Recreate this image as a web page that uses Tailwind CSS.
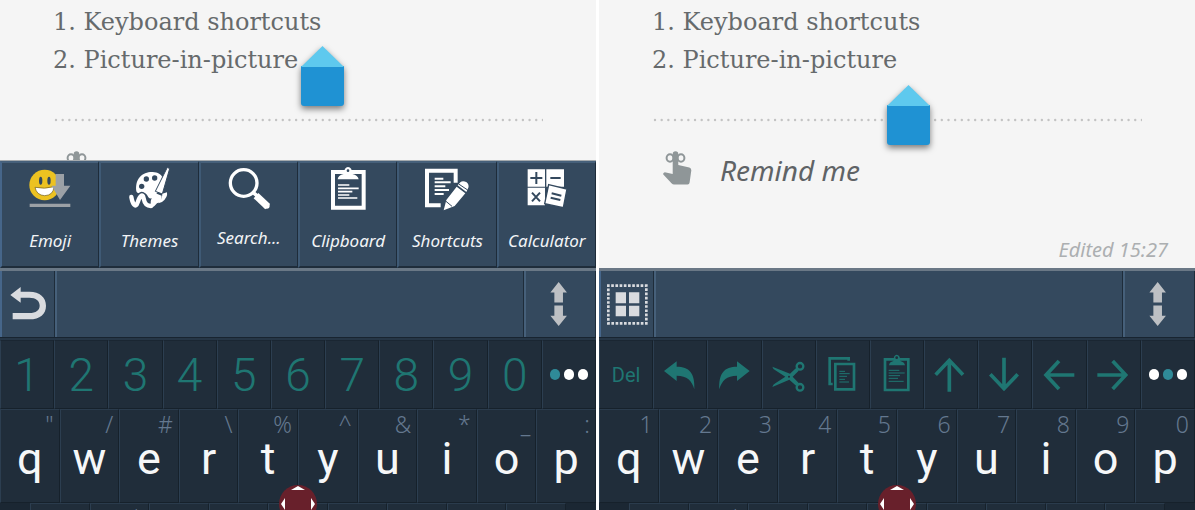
<!DOCTYPE html>
<html lang="en">
  <head>
    <meta charset="UTF-8" />
    <meta name="viewport" content="width=device-width, initial-scale=1.0" />
    <title>Keyboard toolbar</title>
    <script src="https://cdn.jsdelivr.net/npm/@tailwindcss/browser@4"></script>
  </head>
  <body class="bg-white h-screen overflow-hidden">
    <!-- shared shapes -->
    <svg class="hidden">
      <symbol id="reminder" viewBox="0 0 30 34">
        <g fill="none" stroke="#8f9698" stroke-width="2">
          <ellipse cx="7" cy="7" rx="3.4" ry="3.8" />
          <ellipse cx="18" cy="7" rx="3.4" ry="3.8" />
        </g>
        <path fill="#8f9698" d="M9.7 3a2.8 2.8 0 0 1 5.6 0V14l11 2.5q2.2.8 2 3L26.600 31.500q-.2 2-2 2H11q-1.300 0-2.500-1.200L.3 23.500Q-.3 22 1.800 21.200L9.700 23Z" />
      </symbol>
      <symbol id="handle" viewBox="0 0 43 60">
        <path fill="#1f92d3" d="M0 20H43V57q0 3-3 3H3q-3 0-3-3Z" />
        <path fill="#5ec9ee" d="M21.500 0L43 21H0Z" />
      </symbol>
      <symbol id="resize" viewBox="759 52 51 133">
        <path fill="#bdc0c4" d="M785 52L810 84H798V114H772V84H760ZM772 123H798V154H810L785 185L760 154H772Z" />
      </symbol>
    </svg>

    <main class="grid grid-cols-2 gap-[3px] h-full">
      <!-- number keys with the menu open -->
      <section class="flex flex-col min-w-0 relative overflow-hidden bg-[#1b2733]">
        <div class="relative h-[268px] shrink-0 overflow-hidden bg-[#f5f5f5] pl-[53px] pr-[27px] pt-[3px]">
          <div class="font-['DejaVu_Serif',serif] text-2xl leading-[38px] text-[#666a6c]">
            <p>1. Keyboard shortcuts</p>
            <p>2. Picture-in-picture</p>
          </div>
          <svg class="mt-[39px] h-1 w-[calc(100%-26px)]"><line x1="3" y1="2" x2="100%" y2="2" stroke="#c3c3c3" stroke-width="2.400" stroke-linecap="round" stroke-dasharray="0 6.670" /></svg>
          <div class="flex items-center gap-[27px] mt-7 pl-[11px]">
            <svg class="w-[30px] h-[34px]"><use href="#reminder" /></svg>
            <span class="pt-1 font-['Noto_Sans',sans-serif] italic text-[28px] leading-8 text-[#5f6366]">Remind me</span>
          </div>
          <svg class="absolute left-[301px] top-[46px] w-[43px] h-[60px] drop-shadow-[0_3px_3px_rgba(0,0,0,0.5)]"><use href="#handle" /></svg>

          <nav class="absolute inset-x-0 bottom-0 h-[108px] grid grid-cols-6 border-t border-t-[#a5aaad] font-['Noto_Sans',sans-serif] italic text-[17px] text-[#f2f4f6]">
            <button class="flex flex-col items-center gap-[18px] pt-1 min-w-0 bg-[#34495e] border-t-2 border-b-2 border-l-2 border-r border-t-[#46607a] border-l-[#46668a] border-r-[#1e2c3a] border-b-[#1f2d3b]">
              <svg class="w-11 h-11 shrink-0" viewBox="87 51 132 132">
                <circle cx="137" cy="105" r="46" fill="#ecc221" />
                <ellipse cx="125" cy="92" rx="5" ry="12" fill="#34495e" />
                <ellipse cx="150" cy="92" rx="5" ry="12" fill="#34495e" />
                <path fill="#fff" stroke="#6c5a1c" stroke-width="2" d="M108 112Q137 118 165 110Q163 136 137 137Q113 136 108 112Z" />
                <path fill="#9ca1a6" d="M170 72H195V107H214L183 150L158 107H170Z" />
                <path fill="#9ca1a6" d="M92 161H214V171H92Z" />
              </svg>
              <span class="leading-6">Emoji</span>
            </button>
            <button class="flex flex-col items-center gap-[18px] pt-1 min-w-0 bg-[#34495e] border-t-2 border-b-2 border-l-2 border-r border-t-[#46607a] border-l-[#3f5a75] border-r-[#1e2c3a] border-b-[#1f2d3b]">
              <svg class="w-11 h-11 shrink-0" viewBox="381 51 132 132">
                <path fill="#fff" d="M409 124C404 86 428 65 458 66C474 67 484 73 487 82L472 128L456 144C444 150 444 132 434 129C424 126 414 136 409 124Z" />
                <g fill="#34495e"><circle cx="439" cy="87" r="8" /><circle cx="464" cy="84" r="8" /><circle cx="425" cy="109" r="8" /></g>
                <path fill="none" stroke="#34495e" stroke-width="19" d="M393 141C397 165 406 179 412 158C418 138 427 126 430 143C433 163 440 168 451 169" />
                <path fill="none" stroke="#fff" stroke-width="13" stroke-linecap="round" stroke-linejoin="round" d="M394 141C398 163 407 176 413 157C419 138 428 128 431 145C434 163 441 168 453 168" />
                <path fill="#fff" stroke="#34495e" stroke-width="3" d="M502 52L509 56L487 132L466 124Z" />
                <path fill="#fff" d="M463 128L485 137Q484 156 471 160Q464 169 454 175Q447 151 463 128ZM487 131L501 127Q504 143 486 156L475 160Q487 147 487 131Z" />
              </svg>
              <span class="leading-6">Themes</span>
            </button>
            <button class="flex flex-col items-center gap-[15px] pt-1 min-w-0 bg-[#34495e] border-t-2 border-b-2 border-l-2 border-r border-t-[#46607a] border-l-[#3f5a75] border-r-[#1e2c3a] border-b-[#1f2d3b]">
              <svg class="w-11 h-11 shrink-0" viewBox="679 51 132 132">
                <circle cx="729" cy="99" r="40" fill="none" stroke="#fff" stroke-width="10" />
                <path stroke="#fff" stroke-width="11" d="M757 127L772 140" />
                <path stroke="#fff" stroke-width="21" stroke-linejoin="round" d="M766 137L801 170" />
                <circle cx="798" cy="167" r="9" fill="#fff" />
              </svg>
              <span class="leading-6">Search...</span>
            </button>
            <button class="flex flex-col items-center gap-[18px] pt-1 min-w-0 bg-[#34495e] border-t-2 border-b-2 border-l-2 border-r border-t-[#46607a] border-l-[#3f5a75] border-r-[#1e2c3a] border-b-[#1f2d3b]">
              <svg class="w-11 h-11 shrink-0" viewBox="87 51 132 132">
                <path fill="none" stroke="#fff" stroke-width="12" d="M108 66H200V173H108Z" />
                <path fill="#fff" d="M122 88Q123 76 140 72Q142 51 153 51Q165 51 166 72Q183 76 185 88Z" />
                <circle cx="153" cy="62" r="4" fill="#34495e" />
                <path stroke="#fff" stroke-width="5" d="M123 105H157M123 115H185M123 125H166M123 135H157M123 144H181" />
              </svg>
              <span class="leading-6">Clipboard</span>
            </button>
            <button class="flex flex-col items-center gap-[18px] pt-1 min-w-0 bg-[#34495e] border-t-2 border-b-2 border-l-2 border-r border-t-[#46607a] border-l-[#3f5a75] border-r-[#1e2c3a] border-b-[#1f2d3b]">
              <svg class="w-11 h-11 shrink-0" viewBox="385 51 132 132">
                <path fill="none" stroke="#fff" stroke-width="12" d="M477 98V62H391V166H432" />
                <path stroke="#fff" stroke-width="6" d="M414 86H440M414 97H462M414 109H446M414 120H457M414 132H441" />
                <path fill="#fff" d="M441 181L449 150L480 110L506 130L474 168ZM483 106L491 97Q498 91 510 97Q518 103 515 113L509 126Z" />
                <path stroke="#34495e" stroke-width="3" d="M448 154L466 169M486 102L513 120" />
              </svg>
              <span class="leading-6">Shortcuts</span>
            </button>
            <button class="flex flex-col items-center gap-[18px] pt-1 min-w-0 bg-[#34495e] border-t-2 border-b-2 border-l-2 border-r border-t-[#46607a] border-l-[#3f5a75] border-r-[#1e2c3a] border-b-[#1f2d3b]">
              <svg class="w-11 h-11 shrink-0" viewBox="683 51 132 132">
                <path fill="#fff" d="M691 58H743V110H691ZM747 58H800V110H747ZM691 113H743V166H691Z" />
                <path stroke="#34495e" stroke-width="6" d="M699 84H735M717 66V102M759 84H790M704 128L728 154M728 128L704 154" />
                <path fill="#fff" stroke="#34495e" stroke-width="4" d="M754 104L809 117L798 173L742 161Z" />
                <path stroke="#34495e" stroke-width="6" d="M763 130L792 137M760 143L789 150" />
              </svg>
              <span class="leading-6">Calculator</span>
            </button>
          </nav>
        </div>

        <div class="flex shrink-0 h-[70px] bg-[#34495e] border-t-3 border-t-[#6a7886] border-b border-b-[#182430]">
          <button aria-label="Back" class="flex items-center justify-center w-[55px] border-l-2 border-l-[#46668a] border-r border-r-[#1e2c3a]">
            <svg class="w-9 h-[34px]" viewBox="30 69 108 102">
              <path fill="#d9dbdf" d="M31 93L62 69V83H88C120 83 138 100 138 125C138 150 120 166 88 166H38V147H88C108 147 119 138 119 125C119 110 108 101 88 101H62V116Z" />
            </svg>
          </button>
          <div class="flex-1 border-l-2 border-l-[#46607a] border-r border-r-[#1e2c3a]"></div>
          <button aria-label="Resize" class="flex items-center justify-center w-[72px] pr-1 border-l-2 border-l-[#46607a] border-r border-r-[#1e2c3a]">
            <svg class="w-[17px] h-11"><use href="#resize" /></svg>
          </button>
        </div>

        <div id="number-row" class="grid grid-cols-11 shrink-0 h-[71px] border-t-2 border-t-[#263646]"></div>
        <div id="symbol-keys" class="grid grid-cols-10 shrink-0 h-[94px]"></div>
        <div class="relative flex-1 px-[30px]">
          <div id="symbol-row-3" class="grid grid-cols-9"></div>
          <svg class="absolute left-1/2 -translate-x-1/2 -top-[18px] w-[38px] h-[38px]" viewBox="0 0 38 38">
            <circle cx="19" cy="19" r="19" fill="#68202b" />
            <path fill="#fff" d="M19 1L26 5H12ZM2 19L6 13V25ZM36 19L32 13V25Z" />
          </svg>
        </div>
      </section>

      <!-- editing keys -->
      <section class="flex flex-col min-w-0 relative overflow-hidden bg-[#1b2733]">
        <div class="relative h-[268px] shrink-0 overflow-hidden bg-[#f5f5f5] pl-[53px] pr-[27px] pt-[3px]">
          <div class="font-['DejaVu_Serif',serif] text-2xl leading-[38px] text-[#666a6c]">
            <p>1. Keyboard shortcuts</p>
            <p>2. Picture-in-picture</p>
          </div>
          <svg class="mt-[39px] h-1 w-[calc(100%-26px)]"><line x1="3" y1="2" x2="100%" y2="2" stroke="#c3c3c3" stroke-width="2.400" stroke-linecap="round" stroke-dasharray="0 6.670" /></svg>
          <div class="flex items-center gap-[27px] mt-7 pl-[11px]">
            <svg class="w-[30px] h-[34px]"><use href="#reminder" /></svg>
            <span class="pt-1 font-['Noto_Sans',sans-serif] italic text-[28px] leading-8 text-[#5f6366]">Remind me</span>
          </div>
          <p class="mt-[52px] text-right font-['Noto_Sans',sans-serif] italic text-xl leading-6 text-[#acafb1]">Edited 15:27</p>
          <svg class="absolute left-[288px] top-[85px] w-[43px] h-[60px] drop-shadow-[0_3px_3px_rgba(0,0,0,0.5)]"><use href="#handle" /></svg>
        </div>

        <div class="flex shrink-0 h-[70px] bg-[#34495e] border-t-3 border-t-[#6a7886] border-b border-b-[#182430]">
          <button aria-label="Menu" class="flex items-center justify-center w-[55px] border-l-2 border-l-[#46668a] border-r border-r-[#1e2c3a]">
            <svg class="w-[41px] h-[41px]" viewBox="24 56 123 123">
              <rect x="28" y="61" width="114" height="113" fill="none" stroke="#d9dbdf" stroke-width="8" stroke-dasharray="8 4.610" stroke-dashoffset="4" />
              <path fill="#d9dbdf" d="M50 81H81V114H50ZM90 81H121V114H90ZM50 121H81V153H50ZM90 121H121V153H90Z" />
            </svg>
          </button>
          <div class="flex-1 border-l-2 border-l-[#46607a] border-r border-r-[#1e2c3a]"></div>
          <button aria-label="Resize" class="flex items-center justify-center w-[72px] pr-1 border-l-2 border-l-[#46607a] border-r border-r-[#1e2c3a]">
            <svg class="w-[17px] h-11"><use href="#resize" /></svg>
          </button>
        </div>

        <div id="edit-row" class="grid grid-cols-11 shrink-0 h-[71px] border-t-2 border-t-[#263646]"></div>
        <div id="digit-keys" class="grid grid-cols-10 shrink-0 h-[94px]"></div>
        <div class="relative flex-1 px-[30px]">
          <div id="digit-row-3" class="grid grid-cols-9"></div>
          <svg class="absolute left-1/2 -translate-x-1/2 -top-[18px] w-[38px] h-[38px]" viewBox="0 0 38 38">
            <circle cx="19" cy="19" r="19" fill="#68202b" />
            <path fill="#fff" d="M19 1L26 5H12ZM2 19L6 13V25ZM36 19L32 13V25Z" />
          </svg>
        </div>
      </section>
    </main>

    <script>
      const smallKey = "flex items-center justify-center min-w-0 bg-[#202d3a] border border-t-[#1a2632] border-l-[#2c3e50] border-r-[#16212b] border-b-[#16212b] font-[Roboto,sans-serif] text-[#1f7672]";
      const letterKey = "flex flex-col min-w-0 bg-[#202d3a] border border-t-[#2a3b4c] border-l-[#2c3e50] border-r-[#16212b] border-b-[#16212b]";
      const hintText = "block text-right pr-[5px] mb-1 font-['Noto_Sans',sans-serif] font-light text-[23px] leading-7 text-[#64788f]";

      // three page dots, the active one is teal
      function dots(active) {
        let out = '';
        for (let i = 0; i < 3; i++) {
          out += `<span class="w-2.5 h-[11px] rounded-full ${i === active ? 'bg-[#2f8a98]' : 'bg-white'}"></span>`;
        }
        return `<button aria-label="More keys" class="${smallKey}"><span class="flex gap-1">${out}</span></button>`;
      }

      function letters(id, hints) {
        document.getElementById(id).innerHTML = [...'qwertyuiop'].map((letter, i) =>
          `<button class="${letterKey}">
            <span class="${hintText} w-full">${hints[i]}</span>
            <span class="w-full text-center font-[Roboto,sans-serif] text-[45px] leading-[34px] text-[#f6f7f8]">${letter}</span>
          </button>`
        ).join('');
      }

      function thirdRow(id) {
        const hints = ['', '$', '', '', '', '', '', '(', ')'];
        document.getElementById(id).innerHTML = hints.map((hint) =>
          `<button class="${letterKey} h-[92px]"><span class="${hintText} w-full">${hint}</span></button>`
        ).join('');
      }

      document.getElementById('number-row').innerHTML =
        [...'1234567890'].map((n) => `<button class="${smallKey} font-light text-[46px] leading-none">${n}</button>`).join('') + dots(0);

      const editKeys = [
        ['Undo', '193 274 108 108', '<path fill="currentColor" d="M199 316L237 287V303C275 303 292 322 290 371C283 345 268 330 237 330V346Z" />'],
        ['Redo', '356 274 108 108', '<path fill="currentColor" d="M457 316L419 287V303C381 303 364 322 366 371C373 345 388 330 419 330V346Z" />'],
        ['Cut', '518 276 108 108', '<g fill="none" stroke="currentColor" stroke-width="7"><circle cx="605" cy="304" r="10" /><circle cx="605" cy="367" r="10" /></g><path fill="currentColor" d="M522 305L575 326L594 308L601 317L583 335L601 354L594 363L573 344L522 366Q524 359 531 355L561 335L531 316Q524 312 522 305Z" /><circle cx="572" cy="335" r="3" fill="#202d3a" />'],
        ['Copy', '680 276 108 108', '<g fill="none" stroke="currentColor"><path stroke-width="8" d="M751 287V280H694V357H703M711 297H767V373H711Z" /><path stroke-width="3" d="M723 319H740M723 326H754M723 334H746M723 343H740M723 351H752" /></g>'],
        ['Paste', '841 274 108 108', '<path fill="none" stroke="currentColor" stroke-width="8" d="M859 281H929V373H859Z" /><path fill="currentColor" d="M871 299Q872 289 884 286Q885 267 894 267Q904 267 905 286Q917 289 919 299Z" /><circle cx="894" cy="276" r="4" fill="#202d3a" /><path stroke="currentColor" stroke-width="3" d="M870 314H902M870 322H918M870 330H904M870 338H898M870 347H915" />'],
        ['Up', '115 274 108 108', '<path fill="none" stroke="currentColor" stroke-width="11" d="M164 378V284M123 327L164 284L205 327" />'],
        ['Down', '275 274 108 108', '<path fill="none" stroke="currentColor" stroke-width="11" d="M326 276V369M285 326L326 369L367 326" />'],
        ['Left', '440 274 108 108', '<path fill="none" stroke="currentColor" stroke-width="11" d="M537 328H453M491 286L452 328L491 370" />'],
        ['Right', '602 274 108 108', '<path fill="none" stroke="currentColor" stroke-width="11" d="M606 328H690M652 286L691 328L652 370" />'],
      ];
      document.getElementById('edit-row').innerHTML =
        `<button class="${smallKey} text-xl">Del</button>` +
        editKeys.map(([name, box, shape]) =>
          `<button aria-label="${name}" class="${smallKey}"><svg class="w-9 h-9 shrink-0 overflow-visible" viewBox="${box}">${shape}</svg></button>`
        ).join('') + dots(1);

      letters('symbol-keys', ['"', '/', '#', '\\', '%', '^', '&amp;', '*', '_', ':']);
      letters('digit-keys', [...'1234567890']);
      thirdRow('symbol-row-3');
      thirdRow('digit-row-3');
    </script>
  </body>
</html>
